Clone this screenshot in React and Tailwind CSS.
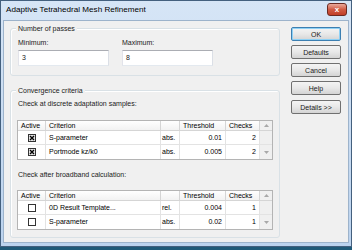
const Check = ({ on }) => (
  <svg width="8" height="8" viewBox="0 0 8 8" className="block">
    <rect x="0.5" y="0.5" width="7" height="7" fill={on ? "#e4e4e4" : "#fff"} stroke="#333" />
    {on && <path d="M2 2 L6 6 M6 2 L2 6" stroke="#000" strokeWidth="1.4" />}
  </svg>
);

const Arrow = ({ up }) => (
  <svg width="5" height="3" viewBox="0 0 5 3" className="block">
    <path d={up ? "M0 3 L2.5 0 L5 3 Z" : "M0 0 L2.5 3 L5 0 Z"} fill="#a8a8a8" />
  </svg>
);

const Grid = ({ rows }) => (
  <div className="w-[256px] border border-[#b4b4b4] bg-white text-[#000]">
    <div className="flex h-[10px] leading-[9px] bg-gradient-to-b from-white to-[#f2f2f2] border-b border-[#d5d5d5]">
      <div className="w-[28px] border-r border-[#d5d5d5] pl-[3px]">Active</div>
      <div className="w-[115px] border-r border-[#d5d5d5] pl-[3px]">Criterion</div>
      <div className="w-[19px] border-r border-[#d5d5d5]" />
      <div className="w-[46px] border-r border-[#d5d5d5] pl-[3px]">Threshold</div>
      <div className="w-[34px] border-r border-[#d5d5d5] pl-[3px]">Checks</div>
      <div className="flex-1 flex justify-center items-center bg-[#f0f0f0]">
        <Arrow up />
      </div>
    </div>
    {rows.map((r, i) => (
      <div key={i} className="flex h-[14px] items-center leading-[13px] border-b last:border-b-0 border-[#e3e3e3]">
        <div className="w-[28px] h-full border-r border-[#e3e3e3] flex items-center justify-center">
          <Check on={r.on} />
        </div>
        <div className="w-[115px] h-full border-r border-[#e3e3e3] pl-[3px]">{r.name}</div>
        <div className="w-[19px] h-full border-r border-[#e3e3e3] pl-[1px] overflow-hidden whitespace-nowrap">{r.unit}</div>
        <div className="w-[46px] h-full border-r border-[#e3e3e3] pr-[3px] text-right">{r.th}</div>
        <div className="w-[34px] h-full border-r border-[#e3e3e3] pr-[3px] text-right">{r.n}</div>
        <div className="flex-1 h-full flex justify-center items-center bg-[#f0f0f0]">
          {i === rows.length - 1 && <Arrow />}
        </div>
      </div>
    ))}
  </div>
);

const Btn = ({ children, def, className = "" }) => (
  <div
    className={`h-[14px] rounded-[2px] border ${def ? "border-[#3c7fb1] shadow-[inset_0_0_0_1px_#8fd1f5]" : "border-[#707070]"} bg-gradient-to-b from-[#f4f4f4] via-[#e8e8e8] to-[#d4d4d4] flex items-center justify-center leading-none ${className}`}
  >
    {children}
  </div>
);

const Group = ({ label, className = "", children }) => (
  <div className={`relative border border-[#d9e1e6] rounded-[3px] shadow-[inset_1px_1px_0_#fff] ${className}`}>
    <span className="absolute -top-[5px] left-[5px] bg-[#f0f0f0] px-[2px] leading-[9px]">{label}</span>
    {children}
  </div>
);

export default function App() {
  return (
    <div className="w-[352px] h-[250px] bg-[#205a78] overflow-hidden font-['Liberation_Sans',Arial,sans-serif] text-[7px] text-[#1a1a1a]">
      <div className="h-[247px] border border-[#44607e] bg-gradient-to-b from-[#d6e5f6] to-[#bcd3ee] flex flex-col">
        <div className="h-[19px] flex items-center pl-[5px] pr-[4px]">
          <span className="text-[8.1px] text-black">Adaptive Tetrahedral Mesh Refinement</span>
          <div className="ml-auto mt-[-2px] w-[20px] h-[13px] rounded-[3px] border border-[#6b2a22] bg-gradient-to-b from-[#e9a99b] via-[#d05b45] to-[#c13d27] flex items-center justify-center text-white font-bold text-[8px] leading-none">
            x
          </div>
        </div>
        <div className="flex-1 mx-[2px] mb-[3px] bg-[#f0f0f0] border border-[#9db3cb] flex">
          <div className="w-[270px] ml-[6px] flex flex-col">
            <Group label="Number of passes" className="mt-[7px] h-[48px] pl-[7px] pt-[9px]">
              <div className="flex gap-[13px]">
                <div className="flex flex-col gap-[3px]">
                  <span className="leading-[9px]">Minimum:</span>
                  <div className="w-[91px] h-[16px] bg-white border border-[#abadb3] border-l-[#e2e3ea] border-r-[#dbdfe6] border-b-[#e3e9ef] pl-[3px] flex items-center">3</div>
                </div>
                <div className="flex flex-col gap-[3px]">
                  <span className="leading-[9px]">Maximum:</span>
                  <div className="w-[91px] h-[16px] bg-white border border-[#abadb3] border-l-[#e2e3ea] border-r-[#dbdfe6] border-b-[#e3e9ef] pl-[3px] flex items-center">8</div>
                </div>
              </div>
            </Group>
            <Group label="Convergence criteria" className="mt-[14px] h-[148px] pl-[6px] pt-[8px]">
              <div className="leading-[9px] pl-[1px] mb-[12px]">Check at discrete adaptation samples:</div>
              <Grid
                rows={[
                  { on: true, name: "S-parameter", unit: "abs.", th: "0.01", n: "2" },
                  { on: true, name: "Portmode kz/k0", unit: "abs.", th: "0.005", n: "2" },
                ]}
              />
              <div className="leading-[9px] pl-[1px] mt-[10px] mb-[11px]">Check after broadband calculation:</div>
              <Grid
                rows={[
                  { on: false, name: "0D Result Template...", unit: "rel.", th: "0.004", n: "1" },
                  { on: false, name: "S-parameter", unit: "abs.", th: "0.02", n: "1" },
                ]}
              />
            </Group>
          </div>
          <div className="w-[50px] ml-[11px] mt-[6px] flex flex-col gap-[4px]">
            <Btn def>OK</Btn>
            <Btn>Defaults</Btn>
            <Btn>Cancel</Btn>
            <Btn>Help</Btn>
            <Btn className="mt-[1px]">Details &gt;&gt;</Btn>
          </div>
        </div>
      </div>
    </div>
  );
}
